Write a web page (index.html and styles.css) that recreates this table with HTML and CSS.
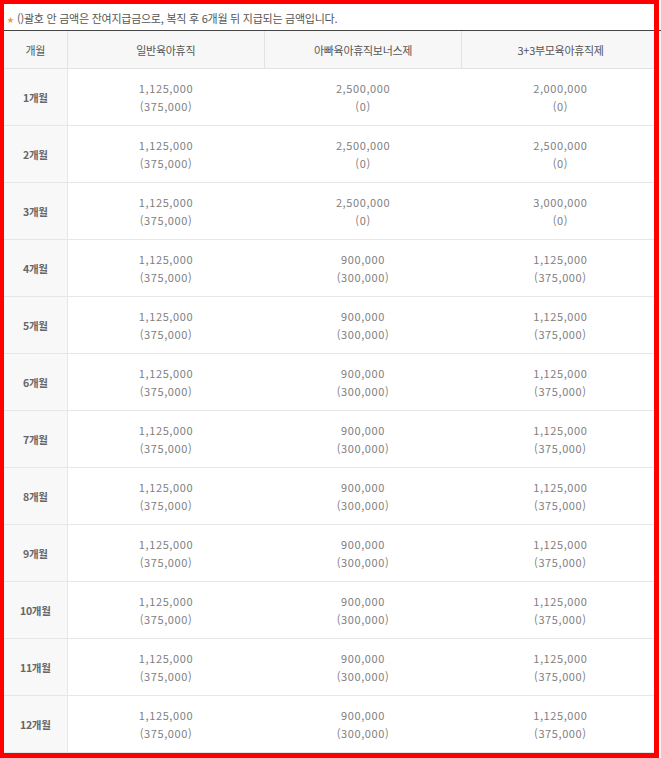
FILE: index.html
```html
<!DOCTYPE html>
<html lang="ko">
<head>
<meta charset="utf-8">
<title>육아휴직 급여</title>
<link rel="stylesheet" href="styles.css">
</head>
<body>
<div class="page">
  <p class="note"><span class="star">★</span>()괄호 안 금액은 잔여지급금으로, 복직 후 6개월 뒤 지급되는 금액입니다.</p>
  <table class="pay">
    <colgroup>
      <col class="c-month"><col class="c-data"><col class="c-data"><col class="c-data">
    </colgroup>
    <thead>
      <tr><th>개월</th><th>일반육아휴직</th><th>아빠육아휴직보너스제</th><th>3+3부모육아휴직제</th></tr>
    </thead>
    <tbody>
      <tr><th>1개월</th><td>1,125,000<br>(375,000)</td><td>2,500,000<br>(0)</td><td>2,000,000<br>(0)</td></tr>
      <tr><th>2개월</th><td>1,125,000<br>(375,000)</td><td>2,500,000<br>(0)</td><td>2,500,000<br>(0)</td></tr>
      <tr><th>3개월</th><td>1,125,000<br>(375,000)</td><td>2,500,000<br>(0)</td><td>3,000,000<br>(0)</td></tr>
      <tr><th>4개월</th><td>1,125,000<br>(375,000)</td><td>900,000<br>(300,000)</td><td>1,125,000<br>(375,000)</td></tr>
      <tr><th>5개월</th><td>1,125,000<br>(375,000)</td><td>900,000<br>(300,000)</td><td>1,125,000<br>(375,000)</td></tr>
      <tr><th>6개월</th><td>1,125,000<br>(375,000)</td><td>900,000<br>(300,000)</td><td>1,125,000<br>(375,000)</td></tr>
      <tr><th>7개월</th><td>1,125,000<br>(375,000)</td><td>900,000<br>(300,000)</td><td>1,125,000<br>(375,000)</td></tr>
      <tr><th>8개월</th><td>1,125,000<br>(375,000)</td><td>900,000<br>(300,000)</td><td>1,125,000<br>(375,000)</td></tr>
      <tr><th>9개월</th><td>1,125,000<br>(375,000)</td><td>900,000<br>(300,000)</td><td>1,125,000<br>(375,000)</td></tr>
      <tr><th>10개월</th><td>1,125,000<br>(375,000)</td><td>900,000<br>(300,000)</td><td>1,125,000<br>(375,000)</td></tr>
      <tr><th>11개월</th><td>1,125,000<br>(375,000)</td><td>900,000<br>(300,000)</td><td>1,125,000<br>(375,000)</td></tr>
      <tr><th>12개월</th><td>1,125,000<br>(375,000)</td><td>900,000<br>(300,000)</td><td>1,125,000<br>(375,000)</td></tr>
    </tbody>
  </table>
  <div class="highlight"></div>
</div>
</body>
</html>
```

FILE: styles.css
```css
html, body {
  margin: 0;
  padding: 0;
  background: #ffffff;
}

body {
  font-family: "Noto Sans CJK KR", "Noto Sans", sans-serif;
  font-size: 11px;
  color: #666;
  overflow: hidden;
}

.page {
  position: relative;
  width: 661px;
  height: 758px;
  padding: 4px 0 0 4px;
  box-sizing: border-box;
}

.note {
  margin: 0;
  height: 26px;
  line-height: 28px;
  border-bottom: 1px solid #444;
  margin-right: -4px;
  color: #555;
  font-size: 11px;
  letter-spacing: -0.25px;
  white-space: nowrap;
}

.star {
  display: inline-block;
  color: #f0a030;
  font-size: 7px;
  width: 13px;
  padding-left: 3px;
  vertical-align: 1px;
  box-sizing: border-box;
}

.pay {
  border-collapse: collapse;
  table-layout: fixed;
  width: 655px;
}

.c-month { width: 63px; }
.c-data { width: 197px; }

.pay thead th {
  height: 37px;
  padding: 0;
  background: #f7f7f7;
  border-right: 1px solid #e3e3e3;
  border-bottom: 1px solid #e3e3e3;
  font-weight: normal;
  color: #555;
  font-size: 11px;
  letter-spacing: -0.3px;
}

.pay thead th:last-child {
  border-right: none;
}

.pay tbody th {
  height: 56px;
  padding: 0;
  background: #f8f8f8;
  border-right: 1px solid #e6e6e6;
  border-bottom: 1px solid #e6e6e6;
  font-weight: 600;
  color: #666;
  font-size: 10.5px;
  letter-spacing: -0.3px;
}

.pay tbody td {
  height: 56px;
  padding: 0;
  text-align: center;
  border-bottom: 1px solid #e6e6e6;
  color: #808080;
  line-height: 18px;
  font-size: 11px;
  letter-spacing: 0.6px;
}

.highlight {
  position: absolute;
  left: 0;
  top: 0;
  width: 659px;
  height: 758px;
  border-style: solid;
  border-color: #ff0000;
  border-width: 4px 5px 5px 4px;
  box-sizing: border-box;
  pointer-events: none;
}
```
